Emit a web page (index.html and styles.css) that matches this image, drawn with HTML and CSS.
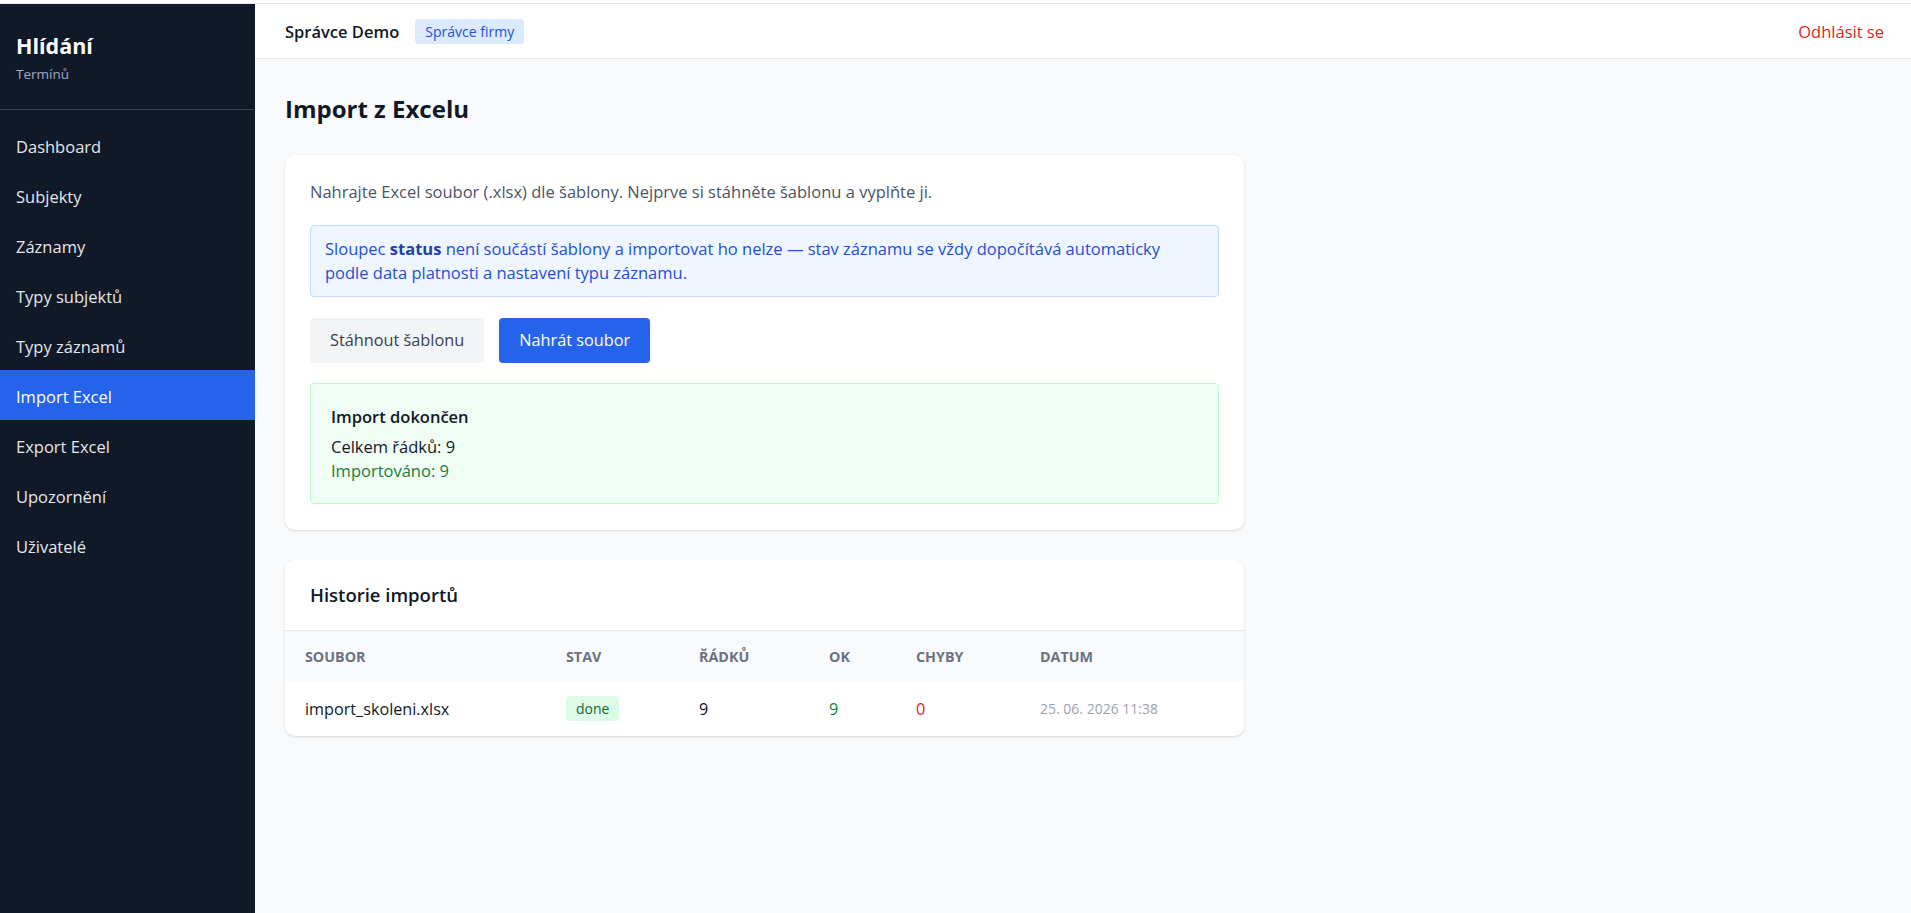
FILE: index.html
```html
<!DOCTYPE html>
<html lang="cs">
<head>
    <meta charset="UTF-8">
    <meta name="viewport" content="width=device-width, initial-scale=1.0">
    <title>Import z Excelu - Hlídání Termínů</title>
    <link rel="stylesheet" href="styles.css">
</head>
<body>
    <div class="app">
        <aside class="sidebar">
            <div class="brand">
                <div class="brand-name">Hlídání</div>
                <div class="brand-sub">Termínů</div>
            </div>
            <nav class="nav">
                <a href="#" class="nav-item">Dashboard</a>
                <a href="#" class="nav-item">Subjekty</a>
                <a href="#" class="nav-item">Záznamy</a>
                <a href="#" class="nav-item">Typy subjektů</a>
                <a href="#" class="nav-item">Typy záznamů</a>
                <a href="#" class="nav-item active">Import Excel</a>
                <a href="#" class="nav-item">Export Excel</a>
                <a href="#" class="nav-item">Upozornění</a>
                <a href="#" class="nav-item">Uživatelé</a>
            </nav>
        </aside>

        <div class="main">
            <header class="topbar">
                <div class="user">
                    <span class="user-name">Správce Demo</span>
                    <span class="role-badge">Správce firmy</span>
                </div>
                <a href="#" class="logout">Odhlásit se</a>
            </header>

            <main class="content">
                <h1 class="page-title">Import z Excelu</h1>

                <div class="card card-import">
                    <p class="intro">Nahrajte Excel soubor (.xlsx) dle šablony. Nejprve si stáhněte šablonu a vyplňte ji.</p>

                    <div class="info-box">
                        Sloupec <strong>status</strong> není součástí šablony a importovat ho nelze — stav záznamu se vždy dopočítává automaticky podle data platnosti a nastavení typu záznamu.
                    </div>

                    <div class="actions">
                        <button class="btn btn-secondary">Stáhnout šablonu</button>
                        <button class="btn btn-primary">Nahrát soubor</button>
                    </div>

                    <div class="result-box">
                        <div class="result-title">Import dokončen</div>
                        <div class="result-line">Celkem řádků: 9</div>
                        <div class="result-line result-ok">Importováno: 9</div>
                    </div>
                </div>

                <div class="card card-history">
                    <div class="card-header">
                        <h2>Historie importů</h2>
                    </div>
                    <table class="history-table">
                        <colgroup>
                            <col style="width: 261px">
                            <col style="width: 133px">
                            <col style="width: 130px">
                            <col style="width: 87px">
                            <col style="width: 124px">
                            <col>
                        </colgroup>
                        <thead>
                            <tr>
                                <th>Soubor</th>
                                <th>Stav</th>
                                <th>Řádků</th>
                                <th>OK</th>
                                <th>Chyby</th>
                                <th>Datum</th>
                            </tr>
                        </thead>
                        <tbody>
                            <tr>
                                <td>import_skoleni.xlsx</td>
                                <td><span class="status status-done">done</span></td>
                                <td>9</td>
                                <td class="num-ok">9</td>
                                <td class="num-err">0</td>
                                <td class="date">25. 06. 2026 11:38</td>
                            </tr>
                        </tbody>
                    </table>
                </div>
            </main>
        </div>
    </div>
</body>
</html>
```

FILE: styles.css
```css
* {
    margin: 0;
    padding: 0;
    box-sizing: border-box;
}

body {
    font-family: 'Open Sans', 'Noto Sans', sans-serif;
    font-size: 16.5px;
    color: #111827;
    background: #fff;
    padding-top: 3px;
}

a {
    text-decoration: none;
}

.app {
    display: flex;
    min-height: calc(100vh - 3px);
    border-top: 1px solid #e5e7eb;
}

/* Sidebar */

.sidebar {
    width: 255px;
    flex-shrink: 0;
    background: #111827;
    color: #fff;
}

.brand {
    height: 106px;
    padding: 28px 16px 0;
    border-bottom: 1px solid #374151;
}

.brand-name {
    font-size: 21.5px;
    font-weight: 700;
    line-height: 28px;
}

.brand-sub {
    font-size: 13.5px;
    line-height: 18px;
    margin-top: 5px;
    color: #a3a8cc;
}

.nav {
    padding-top: 10px;
}

.nav-item {
    display: block;
    height: 50px;
    line-height: 47px;
    padding: 3px 16px 0;
    font-size: 16.5px;
    color: #e5e7eb;
}

.nav-item.active {
    background: #2563eb;
    color: #fff;
}

/* Main */

.main {
    flex: 1;
    display: flex;
    flex-direction: column;
    background: #f9fafb;
}

.topbar {
    height: 55px;
    display: flex;
    align-items: center;
    justify-content: space-between;
    padding: 1px 27px 0 30px;
    background: #fff;
    border-bottom: 1px solid #e5e7eb;
}

.user {
    display: flex;
    align-items: center;
    gap: 16px;
}

.user-name {
    font-size: 16.5px;
    font-weight: 600;
    color: #111827;
}

.role-badge {
    font-size: 14px;
    line-height: 25px;
    padding: 0 10px;
    border-radius: 4px;
    background: #dbeafe;
    color: #1d4ed8;
}

.logout {
    font-size: 16.5px;
    color: #dc2626;
}

.content {
    padding: 34px 30px;
}

.page-title {
    font-size: 24px;
    line-height: 32px;
    font-weight: 700;
    margin-bottom: 30px;
}

.card {
    max-width: 959px;
    background: #fff;
    border-radius: 10px;
    box-shadow: 0 1px 3px rgba(0, 0, 0, 0.1), 0 1px 2px rgba(0, 0, 0, 0.05);
}

.card-import {
    padding: 25px 25px 26px;
    margin-bottom: 30px;
}

.intro {
    font-size: 16.5px;
    line-height: 24px;
    color: #4b5563;
    margin-bottom: 21px;
}

.info-box {
    background: #eff6ff;
    border: 1px solid #bfdbfe;
    border-radius: 4px;
    padding: 11px 14px;
    font-size: 16.5px;
    line-height: 24px;
    color: #1d4ed8;
}

.info-box strong {
    color: #1e40af;
}

.actions {
    display: flex;
    gap: 15px;
    margin: 21px 0 20px;
}

.btn {
    font-family: inherit;
    font-size: 16.3px;
    line-height: 25px;
    padding: 10px 20px;
    border: none;
    border-radius: 4px;
    cursor: pointer;
}

.btn-secondary {
    background: #f3f4f6;
    color: #374151;
}

.btn-primary {
    background: #2563eb;
    color: #fff;
}

.result-box {
    background: #f0fdf4;
    border: 1px solid #bbf7d0;
    border-radius: 4px;
    padding: 21px 20px 20px;
    font-size: 16.5px;
    line-height: 24px;
}

.result-title {
    font-weight: 600;
    color: #111827;
    margin-bottom: 6px;
}

.result-line {
    color: #111827;
}

.result-ok {
    color: #15803d;
}

/* History */

.card-header {
    padding: 23px 25px;
    border-bottom: 1px solid #e5e7eb;
}

.card-header h2 {
    font-size: 18.5px;
    line-height: 24px;
    font-weight: 600;
}

.history-table {
    width: 100%;
    border-collapse: collapse;
    table-layout: fixed;
}

.history-table th {
    height: 50px;
    padding: 0 20px;
    text-align: left;
    font-size: 14.3px;
    font-weight: 700;
    text-transform: uppercase;
    color: #6b7280;
    background: #f9fafb;
}

.history-table td {
    height: 55px;
    padding: 0 20px;
    font-size: 16.2px;
    color: #111827;
}

.status {
    display: inline-block;
    font-size: 14px;
    line-height: 25px;
    padding: 0 10px;
    border-radius: 4px;
}

.status-done {
    background: #dcfce7;
    color: #166534;
}

.num-ok {
    color: #15803d !important;
}

.num-err {
    color: #dc2626 !important;
}

.date {
    font-size: 14px !important;
    color: #9ca3af !important;
}
```
